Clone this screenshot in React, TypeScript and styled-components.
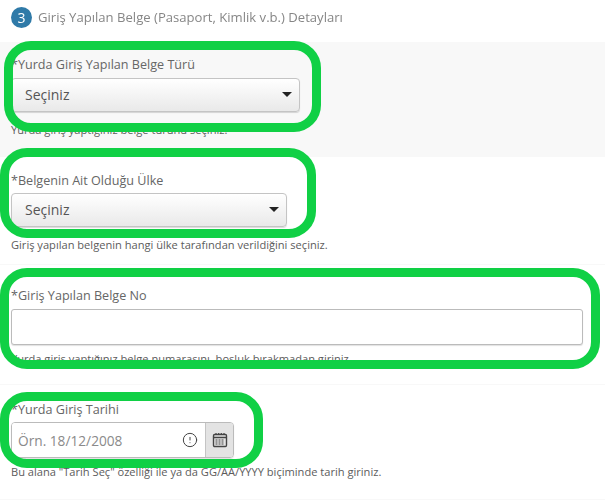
import React from 'react'
import styled, { createGlobalStyle } from 'styled-components'
import { CircleAlert } from 'lucide-react'

const GlobalStyle = createGlobalStyle`
    html, body {
        margin: 0;
        padding: 0;
        background: #ffffff;
    }
    body {
        font-family: "Open Sans", "Liberation Sans", sans-serif;
        color: #555555;
    }
`

type Box = { top: number; left: number; width: number; height: number }

const CalendarIcon: React.FunctionComponent = () => (
    <svg width="16" height="16" viewBox="0 0 16 16" fill="none">
        <rect x="1.5" y="2.5" width="13" height="12" rx="1.2" stroke="#444" strokeWidth="1.4" />
        <path d="M1.5 5.5h13" stroke="#444" strokeWidth="1.6" />
        <path d="M4 1v2M6.7 1v2M9.3 1v2M12 1v2" stroke="#444" strokeWidth="1.2" />
        <path d="M3.5 8h9M3.5 10h9M3.5 12h9" stroke="#444" strokeWidth="1.2" strokeDasharray="2 1" />
    </svg>
)

export default function App() {
    return (
        <Page>
            <GlobalStyle />
            <Header>
                <StepNumber>3</StepNumber>
                <Title>Giriş Yapılan Belge (Pasaport, Kimlik v.b.) Detayları</Title>
            </Header>

            <Block $shaded $height={115} $pad={12}>
                <Label>*Yurda Giriş Yapılan Belge Türü</Label>
                <Select $width={289}>
                    Seçiniz
                    <Caret />
                </Select>
                <Hint $gap={10}>Yurda giriş yaptığınız belge türünü seçiniz.</Hint>
                <Highlight $box={{ top: -1, left: 4, width: 317, height: 91 }} />
            </Block>

            <Block $height={108} $pad={12}>
                <Label $drop>*Belgenin Ait Olduğu Ülke</Label>
                <Select $width={276}>
                    Seçiniz
                    <Caret />
                </Select>
                <Hint $gap={10}>Giriş yapılan belgenin hangi ülke tarafından verildiğini seçiniz.</Hint>
                <Highlight $box={{ top: -9, left: 0, width: 316, height: 90 }} />
            </Block>

            <Block $height={120} $pad={20}>
                <Label>*Giriş Yapılan Belge No</Label>
                <TextField $width={572} />
                <Hint $gap={6}>Yurda giriş yaptığınız belge numarasını, boşluk bırakmadan giriniz.</Hint>
                <Highlight $box={{ top: 3, left: 0, width: 600, height: 101 }} />
            </Block>

            <Block $height={115} $pad={13}>
                <Label $drop>*Yurda Giriş Tarihi</Label>
                <DateField>
                    <DateInput>
                        Örn. 18/12/2008
                        <CircleAlert size={16} strokeWidth={1.5} color="#444" />
                    </DateInput>
                    <DateButton>
                        <CalendarIcon />
                    </DateButton>
                </DateField>
                <Hint $gap={6}>Bu alana "Tarih Seç" özelliği ile ya da GG/AA/YYYY biçiminde tarih giriniz.</Hint>
                <Highlight $box={{ top: 7, left: 0, width: 263, height: 76 }} />
            </Block>
        </Page>
    )
}

const Page = styled.div`
    width: 605px;
    height: 500px;
    overflow: hidden;
    filter: blur(0.35px);
`
const Header = styled.div`
    height: 42px;
    box-sizing: border-box;
    padding: 7px 0 0 11px;
    display: flex;
    align-items: flex-start;
    gap: 6px;
`
const StepNumber = styled.div`
    width: 21px;
    height: 21px;
    border-radius: 50%;
    background: #2f7aa8;
    color: #ffffff;
    font-size: 14px;
    line-height: 21px;
    text-align: center;
`
const Title = styled.div`
    font-size: 13.1px;
    line-height: 21px;
    color: #868686;
`
const Block = styled.div<{ $shaded?: boolean; $height: number; $pad: number }>`
    position: relative;
    box-sizing: border-box;
    height: ${p => p.$height}px;
    padding: ${p => p.$pad}px 0 0 11px;
    background: ${p => (p.$shaded ? '#f8f8f8' : '#ffffff')};
    border-bottom: 1px solid #f8f8f8;
`
const Label = styled.div<{ $drop?: boolean }>`
    font-size: 12.6px;
    line-height: ${p => (p.$drop ? 24 : 22)}px;
    height: 20px;
    margin-bottom: 4px;
    color: #666666;
`
const Select = styled.div<{ $width: number }>`
    position: relative;
    box-sizing: border-box;
    width: ${p => p.$width}px;
    height: 34px;
    padding-left: 13px;
    border: 1px solid #c4c4c4;
    border-radius: 4px;
    background: linear-gradient(#ffffff, #e9e9e9);
    box-shadow: 0 1px 1px rgba(0, 0, 0, 0.15);
    font-size: 14px;
    line-height: 32px;
    color: #555555;
`
const Caret = styled.span`
    position: absolute;
    right: 7px;
    top: 13px;
    border-left: 5px solid transparent;
    border-right: 5px solid transparent;
    border-top: 5px solid #222222;
`
const TextField = styled.div<{ $width: number }>`
    box-sizing: border-box;
    width: ${p => p.$width}px;
    height: 36px;
    border: 1px solid #bbbbbb;
    border-radius: 3px;
    background: #ffffff;
    box-shadow: 0 1px 1px rgba(0, 0, 0, 0.12);
`
const Hint = styled.div<{ $gap: number }>`
    margin-top: ${p => p.$gap}px;
    font-size: 11.1px;
    line-height: 16px;
    color: #5c5c5c;
    white-space: nowrap;
`
const DateField = styled.div`
    display: flex;
    width: 223px;
    height: 36px;
    box-sizing: border-box;
    border: 1px solid #bbbbbb;
    border-radius: 4px;
    overflow: hidden;
    box-shadow: 0 1px 1px rgba(0, 0, 0, 0.12);
`
const DateInput = styled.div`
    flex: 1;
    display: flex;
    align-items: center;
    justify-content: space-between;
    padding: 0 7px 0 6px;
    background: #ffffff;
    font-size: 13.7px;
    color: #8a8a8a;
`
const DateButton = styled.div`
    width: 27px;
    display: flex;
    align-items: center;
    justify-content: center;
    border-left: 1px solid #c4c4c4;
    background: #e3e3e3;
`
const Highlight = styled.div<{ $box: Box }>`
    position: absolute;
    top: ${p => p.$box.top}px;
    left: ${p => p.$box.left}px;
    width: ${p => p.$box.width}px;
    height: ${p => p.$box.height}px;
    box-sizing: border-box;
    border: 9px solid #10d045;
    border-radius: 27px;
    pointer-events: none;
`
